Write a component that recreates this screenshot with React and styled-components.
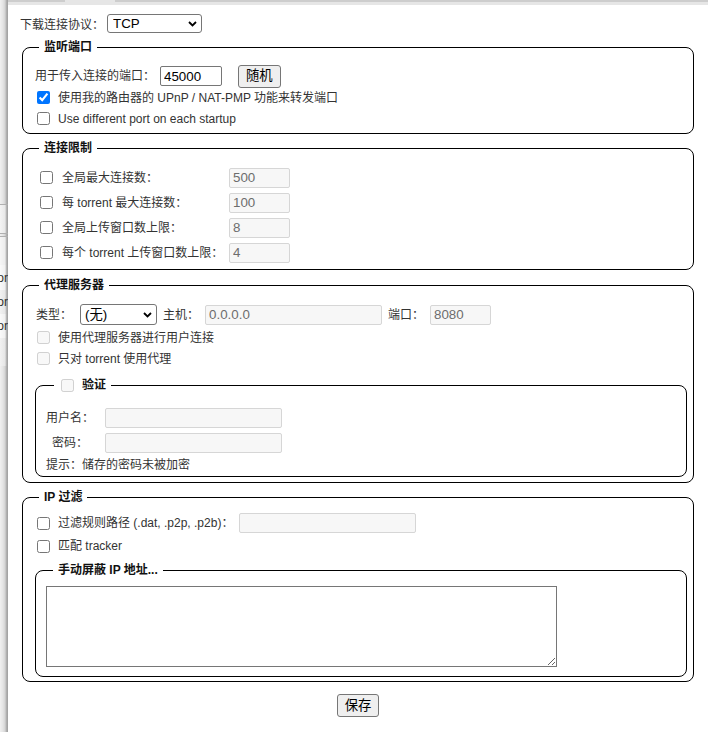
import styled, { createGlobalStyle } from "styled-components"

const FONT = `"Liberation Sans", "Noto Sans CJK SC", sans-serif`

const GlobalStyle = createGlobalStyle`
  html, body {
    margin: 0;
    padding: 0;
    background: #fff;
  }
  body {
    font-family: ${FONT};
    font-size: 12px;
    color: #333;
  }
  #root {
    height: 732px;
    overflow: hidden;
  }
`

const Screen = styled.div`
  display: flex;
  height: 732px;
  overflow: hidden;
`
const Side = styled.div`
  width: 8px;
  flex-shrink: 0;
  display: flex;
  flex-direction: column;
  overflow: hidden;
  background: linear-gradient(to right, #f0f0f0 0, #e4e4e4 3px, #d4d4d4 5px, #bcbcbc 6px, #a4a4a4 7px, #a4a4a4 8px);
`
const SideRow = styled.div`
  height: ${props => props.$h}px;
  flex-shrink: 0;
  display: flex;
  justify-content: flex-end;
  align-items: center;
  line-height: 14px;
  color: #333;
  background: ${props => props.$bg || "transparent"};
  border-bottom: ${props => props.$line ? "1px solid #b0b0b0" : "none"};
  box-sizing: border-box;
`
const Column = styled.div`
  flex: 1;
  min-width: 0;
  display: flex;
  flex-direction: column;
`
const TabStrip = styled.div`
  display: flex;
  height: 2px;
  flex-shrink: 0;
`
const TabSeg = styled.div`
  width: ${props => props.$w ? `${props.$w}px` : "auto"};
  flex: ${props => props.$grow ? 1 : "none"};
  background: ${props => props.$active ? "#e6e6e6" : "#cdcdcd"};
`
const TabBand = styled.div`
  height: 3px;
  flex-shrink: 0;
  background: #e6e6e6;
`
const Panel = styled.div`
  flex: 1;
  padding: 0 14px 0 12px;
  background: #fff;
`
const TopRow = styled.div`
  display: flex;
  align-items: center;
  height: 19px;
  margin-top: 9px;
  white-space: nowrap;
`
const Fieldset = styled.fieldset`
  border: 1px solid #000;
  border-radius: 8px;
  margin: ${props => props.$mt || 0}px 0 0 ${props => props.$ml || 0}px;
  padding: ${props => props.$pad};
  min-width: 0;
`
const Legend = styled.legend`
  margin-left: ${props => props.$ml}px;
  padding: 0 5px;
  height: 14px;
  line-height: 14px;
  font-weight: bold;
  color: #111;
  display: flex;
  align-items: center;
  white-space: nowrap;
`
const Row = styled.div`
  display: flex;
  align-items: center;
  height: ${props => props.$h}px;
  line-height: 14px;
  white-space: nowrap;
`
const LimitRow = styled.div`
  display: grid;
  grid-template-columns: 27px 167px 61px;
  align-items: center;
  height: 25px;
  line-height: 14px;
  white-space: nowrap;
`
const AuthGrid = styled.div`
  display: grid;
  grid-template-columns: 48px 177px;
  grid-auto-rows: 25px;
  column-gap: 11px;
  align-items: center;
  line-height: 14px;
`
const AuthLabel = styled.span`
  text-align: center;
  white-space: nowrap;
  color: #333;
`
const Label = styled.span`
  margin-left: ${props => props.$ml || 0}px;
  color: #333;
`
const Check = styled.input.attrs({ type: "checkbox" })`
  width: 13px;
  height: 13px;
  flex-shrink: 0;
  margin: 0 ${props => props.$gap ?? 8}px 0 ${props => props.$ml ?? 2}px;
`
const TextInput = styled.input`
  box-sizing: border-box;
  width: ${props => props.$w}px;
  height: 20px;
  margin: 0 0 0 ${props => props.$ml || 0}px;
  padding: 0 3px;
  border: 1px solid ${props => props.disabled ? "#d6d6d6" : "#767676"};
  border-radius: 2px;
  background: ${props => props.disabled ? "#f7f7f7" : "#fff"};
  color: ${props => props.disabled ? "#6d6d6d" : "#000"};
  font: 13.333px ${FONT};
  outline: none;
`
const SelectBox = styled.div`
  position: relative;
  display: inline-flex;
  margin-left: ${props => props.$ml || 0}px;
`
const Select = styled.select`
  appearance: none;
  box-sizing: border-box;
  width: ${props => props.$w}px;
  height: ${props => props.$h}px;
  margin: 0;
  padding: 0 0 0 ${props => props.$pl}px;
  border: 1px solid #767676;
  border-radius: 3px;
  background: #fff;
  color: #000;
  font: 13.333px ${FONT};
`
const Chevron = styled.svg`
  position: absolute;
  right: 5px;
  top: 50%;
  transform: translateY(-50%);
  pointer-events: none;
`
const Button = styled.button`
  box-sizing: border-box;
  height: 23px;
  margin: 0 0 0 ${props => props.$ml || 0}px;
  padding: 0 7px;
  border: 1px solid #767676;
  border-radius: 3px;
  background: #efefef;
  color: #000;
  font: 13.333px ${FONT};
  line-height: 1;
`
const TextArea = styled.textarea`
  display: block;
  box-sizing: border-box;
  width: 511px;
  height: 81px;
  margin: 0;
  border: 1px solid #767676;
  border-radius: 0;
  font: 13.333px ${FONT};
`
const ButtonRow = styled.div`
  display: flex;
  justify-content: center;
  padding-left: 2px;
  margin-top: 12px;
`

const Dropdown = ({ w, h, pl, ml, value, options }) => (
  <SelectBox $ml={ml}>
    <Select $w={w} $h={h} $pl={pl} defaultValue={value}>
      {options.map(option => <option key={option}>{option}</option>)}
    </Select>
    <Chevron width="9" height="6" viewBox="0 0 9 6">
      <path d="M1 1 L4.5 4.5 L8 1" fill="none" stroke="#000" strokeWidth="1.8" />
    </Chevron>
  </SelectBox>
)

const limits = [
  { label: "全局最大连接数：", value: "500" },
  { label: "每 torrent 最大连接数：", value: "100" },
  { label: "全局上传窗口数上限：", value: "8" },
  { label: "每个 torrent 上传窗口数上限：", value: "4" },
]

const App = () => {
  return (
    <>
      <GlobalStyle />
      <Screen>
        <Side>
          <SideRow $h={205} $line />
          <SideRow $h={29} $line $bg="linear-gradient(to right, #f4f4f4, #e8e8e8 5px, #a4a4a4 7px)" />
          <SideRow $h={3} $line />
          <SideRow $h={28} $bg="linear-gradient(to right, #f6f6f6, #ececec 5px, #a4a4a4 7px)" />
          <SideRow $h={25} $bg="linear-gradient(to right, #fafafa, #f0f0f0 5px, #a4a4a4 7px)">or</SideRow>
          <SideRow $h={24} $bg="linear-gradient(to right, #f2f2f2, #e6e6e6 5px, #a4a4a4 7px)">or</SideRow>
          <SideRow $h={24} $bg="linear-gradient(to right, #fafafa, #f0f0f0 5px, #a4a4a4 7px)">or</SideRow>
          <SideRow $h={28} $bg="linear-gradient(to right, #f2f2f2, #e6e6e6 5px, #a4a4a4 7px)" />
        </Side>

        <Column>
          <TabStrip>
            <TabSeg $w={57} />
            <TabSeg $w={50} $active />
            <TabSeg $grow />
          </TabStrip>
          <TabBand />

          <Panel>
            <TopRow>
              <Label>下载连接协议：</Label>
              <Dropdown ml={3} w={95} h={19} pl={5} value="TCP" options={["TCP", "μTP", "TCP 和 μTP"]} />
            </TopRow>

            <Fieldset $ml={2} $mt={7} $pad="11px 6px 4px 12px">
              <Legend $ml={4}>监听端口</Legend>
              <Row $h={22}>
                <Label>用于传入连接的端口：</Label>
                <TextInput $w={62} $ml={5} defaultValue="45000" />
                <Button $ml={16}>随机</Button>
              </Row>
              <Row $h={21}>
                <Check defaultChecked />
                <Label>使用我的路由器的 UPnP / NAT-PMP 功能来转发端口</Label>
              </Row>
              <Row $h={21}>
                <Check />
                <Label>Use different port on each startup</Label>
              </Row>
            </Fieldset>

            <Fieldset $ml={2} $mt={7} $pad="10px 6px 4px 12px">
              <Legend $ml={4}>连接限制</Legend>
              {limits.map(limit => (
                <LimitRow key={limit.label}>
                  <Check $ml={5} $gap={0} />
                  <Label>{limit.label}</Label>
                  <TextInput disabled $w={61} defaultValue={limit.value} />
                </LimitRow>
              ))}
            </Fieldset>

            <Fieldset $ml={2} $mt={8} $pad="10px 6px 5px 12px">
              <Legend $ml={4}>代理服务器</Legend>
              <Row $h={25}>
                <Label $ml={1}>类型：</Label>
                <Dropdown ml={8} w={77} h={21} pl={4} value="(无)" options={["(无)", "SOCKS4", "SOCKS5", "HTTP"]} />
                <Label $ml={6}>主机：</Label>
                <TextInput disabled $w={177} $ml={6} defaultValue="0.0.0.0" />
                <Label $ml={6}>端口：</Label>
                <TextInput disabled $w={61} $ml={6} defaultValue="8080" />
              </Row>
              <Row $h={21}>
                <Check disabled />
                <Label>使用代理服务器进行用户连接</Label>
              </Row>
              <Row $h={21}>
                <Check disabled />
                <Label>只对 torrent 使用代理</Label>
              </Row>

              <Fieldset $mt={9} $pad="13px 6px 1px 10px">
                <Legend $ml={8}>
                  <Check disabled $ml={2} $gap={8} />
                  验证
                </Legend>
                <AuthGrid>
                  <AuthLabel>用户名：</AuthLabel>
                  <TextInput disabled $w={177} />
                  <AuthLabel>密码：</AuthLabel>
                  <TextInput disabled type="password" $w={177} />
                </AuthGrid>
                <Row $h={20}>
                  <Label>提示：储存的密码未被加密</Label>
                </Row>
              </Fieldset>
            </Fieldset>

            <Fieldset $ml={2} $mt={7} $pad="7px 6px 4px 12px">
              <Legend $ml={4}>IP 过滤</Legend>
              <Row $h={24}>
                <Check />
                <Label>过滤规则路径 (.dat, .p2p, .p2b)：</Label>
                <TextInput disabled $w={177} $ml={6} />
              </Row>
              <Row $h={22}>
                <Check />
                <Label>匹配 tracker</Label>
              </Row>

              <Fieldset $mt={6} $pad="9px 6px 9px 10px">
                <Legend $ml={7}>手动屏蔽 IP 地址...</Legend>
                <TextArea />
              </Fieldset>
            </Fieldset>

            <ButtonRow>
              <Button>保存</Button>
            </ButtonRow>
          </Panel>
        </Column>
      </Screen>
    </>
  )
}
export default App
